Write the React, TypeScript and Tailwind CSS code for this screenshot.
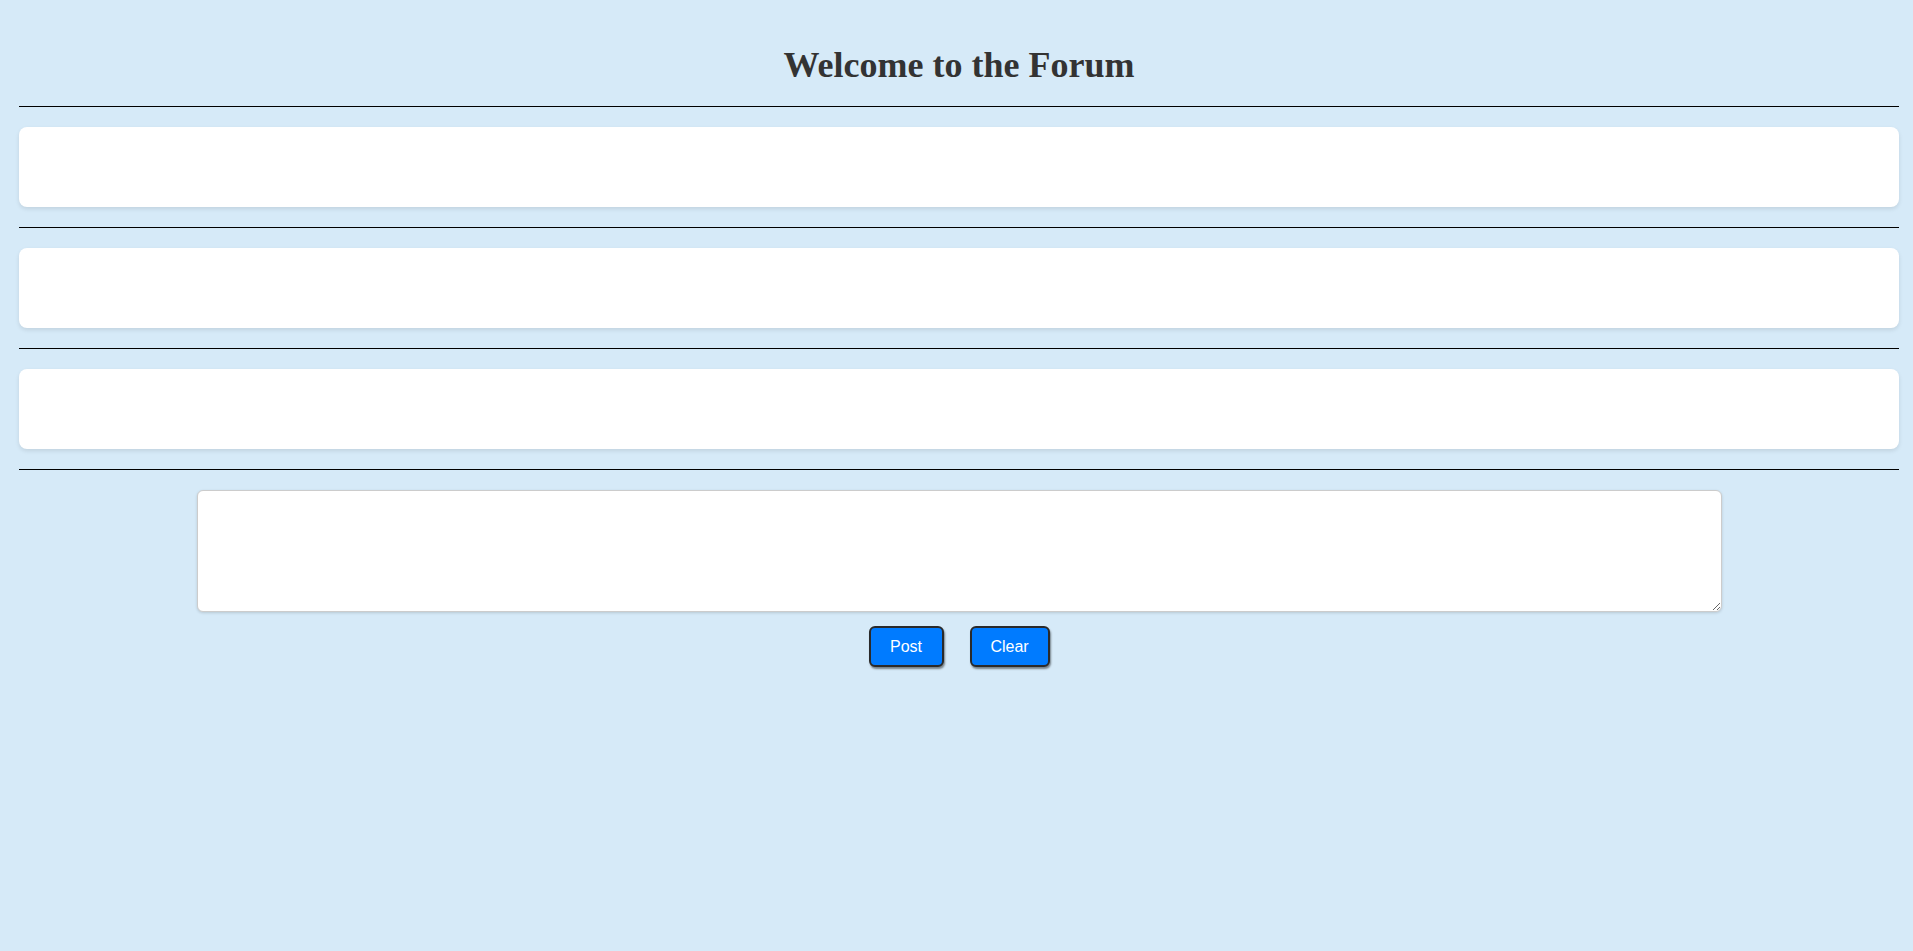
import React from "react";

const posts = [1, 2, 3];

export default function App() {
  return (
    <div className="min-h-[951px] bg-[#d6eaf8] pl-[19px] pr-[14px] pt-[45px] font-['Liberation_Sans',Arial,sans-serif]">
      <h1 className="mb-[21px] text-center font-['Liberation_Serif','Times_New_Roman',serif] text-[36px] font-bold leading-[40px] text-[#333]">
        Welcome to the Forum
      </h1>
      <div className="h-px bg-black" />
      {posts.map((p) => (
        <div key={p}>
          <div className="my-[20px] h-[80px] rounded-lg bg-white shadow-[0_2px_4px_rgba(0,0,0,0.1)]" />
          <div className="h-px bg-black" />
        </div>
      ))}
      <div className="mt-[20px] flex flex-col items-center">
        <textarea className="block h-[122px] w-[1525px] rounded-md border border-[#ccc] bg-white p-2 shadow-[0_1px_3px_rgba(0,0,0,0.15)] outline-none" />
        <div className="mt-[14px] flex gap-[26px]">
          <button className="h-[41px] w-[75px] rounded-md border-2 border-[#2a2a2a] bg-[#007bff] text-[16px] text-white shadow-[1px_2px_2px_rgba(0,0,0,0.45)]">
            Post
          </button>
          <button className="h-[41px] w-[80px] rounded-md border-2 border-[#2a2a2a] bg-[#007bff] text-[16px] text-white shadow-[1px_2px_2px_rgba(0,0,0,0.45)]">
            Clear
          </button>
        </div>
      </div>
    </div>
  );
}
